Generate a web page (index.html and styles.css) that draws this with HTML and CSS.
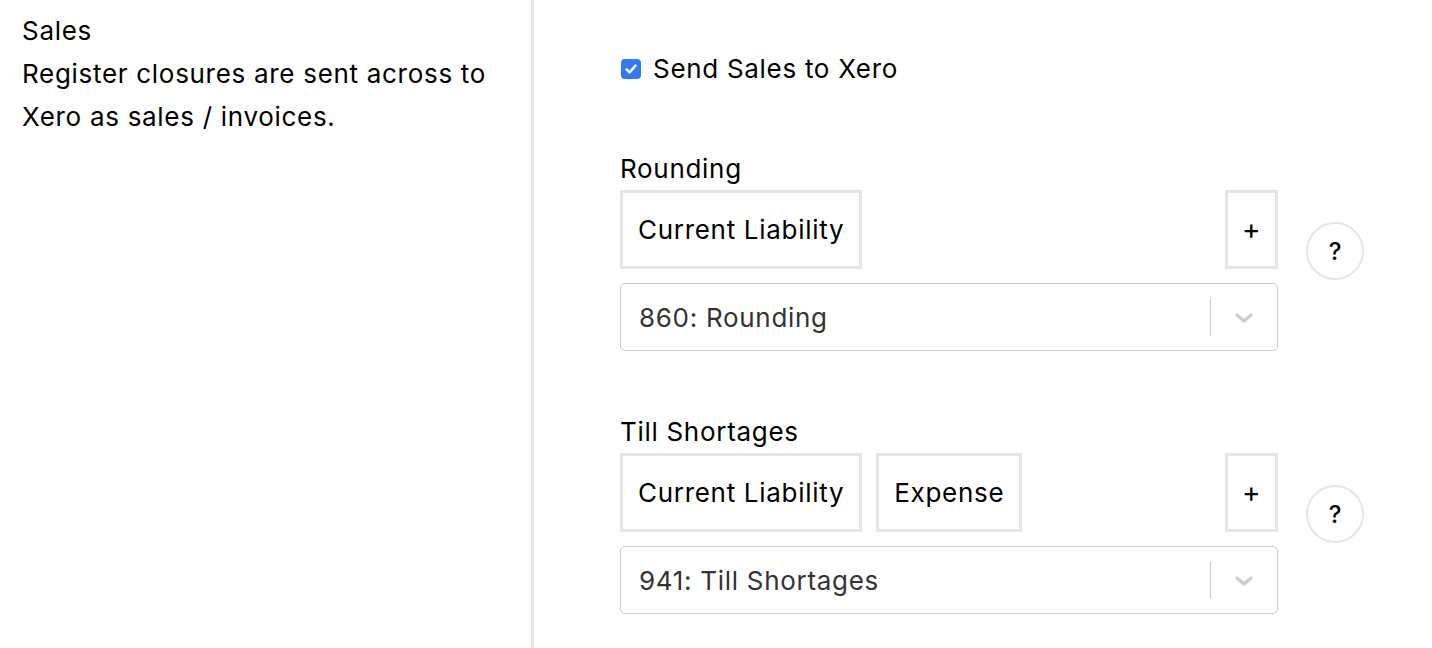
FILE: index.html
```html
<!DOCTYPE html>
<html lang="en">
  <head>
    <meta charset="UTF-8" />
    <meta name="viewport" content="width=device-width, initial-scale=1.0" />
    <title>Xero Settings</title>
    <link rel="stylesheet" href="styles.css">
  </head>
  <body>
    <div class="page">
      <div class="side">
        <div class="side-title">Sales</div>
        <div class="side-text">Register closures are sent across to Xero as sales / invoices.</div>
      </div>

      <div class="main">
        <label class="check-row">
          <span class="checkbox">
            <svg width="14" height="14" viewBox="0 0 14 14">
              <path d="M2.5 7.4 L5.6 10.4 L11.5 3.6" fill="none" stroke="#fff" stroke-width="2.4" stroke-linecap="round" stroke-linejoin="round" />
            </svg>
          </span>
          Send Sales to Xero
        </label>

        <!-- Rounding account -->
        <div class="field">
          <div class="field-label">Rounding</div>
          <div class="field-body">
            <div class="controls">
              <div class="tags">
                <button class="tag">Current Liability</button>
                <button class="tag tag-add">+</button>
              </div>
              <div class="select">
                <span class="select-value">860: Rounding</span>
                <span class="select-sep"></span>
                <span class="select-arrow">
                  <svg width="20" height="12" viewBox="0 0 20 12">
                    <path d="M3 3 L10 9 L17 3" fill="none" stroke="#ccc" stroke-width="3.2" stroke-linecap="round" stroke-linejoin="round" />
                  </svg>
                </span>
              </div>
            </div>
            <button class="help">?</button>
          </div>
        </div>

        <!-- Till shortages account -->
        <div class="field">
          <div class="field-label">Till Shortages</div>
          <div class="field-body">
            <div class="controls">
              <div class="tags">
                <button class="tag">Current Liability</button>
                <button class="tag">Expense</button>
                <button class="tag tag-add">+</button>
              </div>
              <div class="select">
                <span class="select-value">941: Till Shortages</span>
                <span class="select-sep"></span>
                <span class="select-arrow">
                  <svg width="20" height="12" viewBox="0 0 20 12">
                    <path d="M3 3 L10 9 L17 3" fill="none" stroke="#ccc" stroke-width="3.2" stroke-linecap="round" stroke-linejoin="round" />
                  </svg>
                </span>
              </div>
            </div>
            <button class="help">?</button>
          </div>
        </div>
      </div>
    </div>
  </body>
</html>
```

FILE: styles.css
```css
body {
  font-family: Inter, "Noto Sans", sans-serif;
  font-size: 26px;
  letter-spacing: 0.7px;
  line-height: 43px;
  color: #000;
  margin: 0;
  padding: 0;
  background-color: #fff;
}

.page {
  display: flex;
  min-height: 100vh;
}

.side {
  width: 534px;
  flex-shrink: 0;
  box-sizing: border-box;
  padding: 9px 22px;
  border-right: 3px solid #e4e4e9;
}

.main {
  padding: 47px 0 0 86px;
}

.check-row {
  display: flex;
  align-items: center;
  gap: 12px;
  cursor: pointer;
}

.checkbox {
  width: 20px;
  height: 20px;
  margin-left: 1px;
  border-radius: 4px;
  background-color: #3478f6;
  display: flex;
  align-items: center;
  justify-content: center;
}

.field {
  margin-top: 57px;
}

.field + .field {
  margin-top: 59px;
}

.field-body {
  display: flex;
  align-items: flex-start;
  gap: 28px;
}

.controls {
  width: 658px;
}

.tags {
  display: flex;
  gap: 14px;
}

.tag {
  font: inherit;
  letter-spacing: inherit;
  color: #000;
  background-color: #fff;
  border: 3px solid #e4e4e9;
  padding: 15px 15px;
  cursor: pointer;
}

.tag-add {
  margin-left: auto;
  width: 53px;
  padding: 15px 0;
  font-size: 28px;
}

.select {
  display: flex;
  align-items: center;
  height: 68px;
  box-sizing: border-box;
  margin-top: 14px;
  border: 1px solid #ccc;
  border-radius: 5px;
  padding-left: 18px;
  color: #333;
}

.select-value {
  flex: 1;
}

.select-sep {
  width: 1px;
  height: 38px;
  background-color: #ccc;
}

.select-arrow {
  width: 66px;
  display: flex;
  justify-content: center;
  padding-top: 2px;
}

.help {
  width: 58px;
  height: 58px;
  margin-top: 32px;
  border: 2px solid #e6e6e6;
  border-radius: 50%;
  background-color: #fff;
  font-family: Inter, sans-serif;
  font-size: 24px;
  font-weight: 500;
  color: #000;
  padding: 0;
  cursor: pointer;
}
```
